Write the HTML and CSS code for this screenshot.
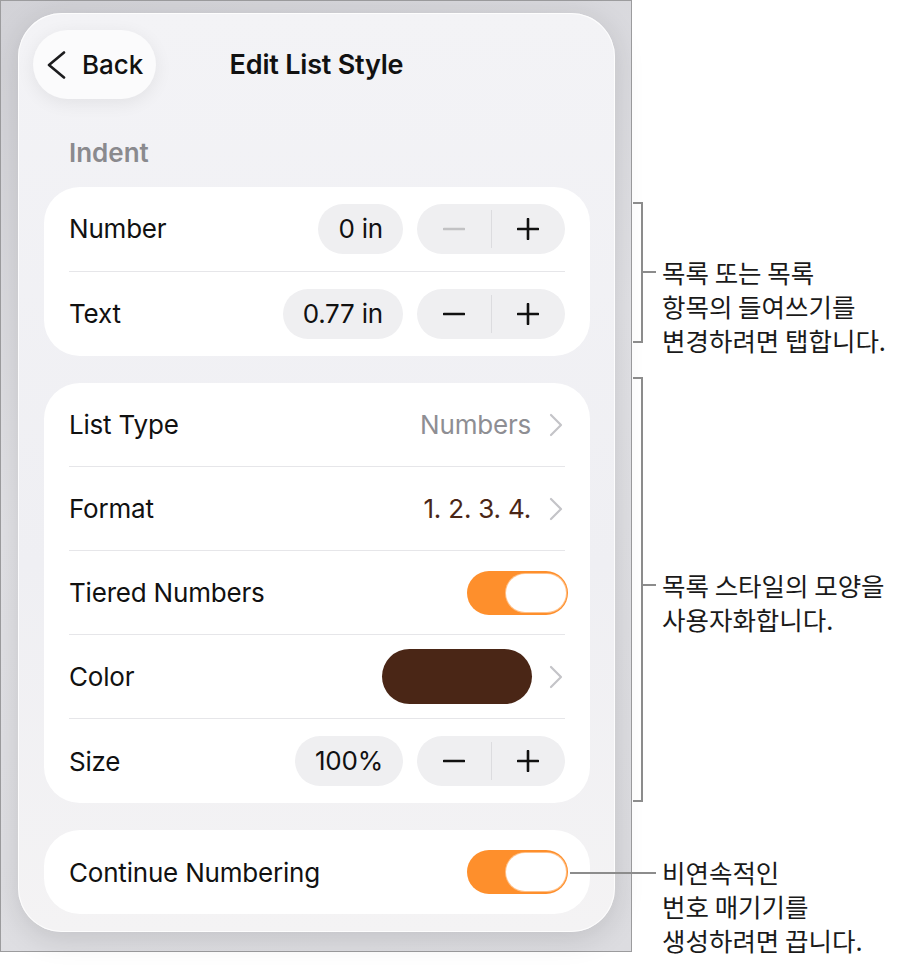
FILE: index.html
```html
<!DOCTYPE html>
<html>
<head>
  <meta charset="utf-8">
  <title>Edit List Style</title>
  <link rel="stylesheet" href="styles.css">
</head>
<body>
  <div class="page">
    <div class="device">
      <div class="sheet">
        <div class="nav">
          <button class="back">
            <svg width="19" height="28" viewBox="0 0 19 28"><polyline points="17,1.5 2,14 17,26.5" fill="none" stroke="#1c1c1e" stroke-width="2.6" stroke-linecap="round" stroke-linejoin="round"/></svg>
            <span>Back</span>
          </button>
          <div class="title">Edit List Style</div>
          <div></div>
        </div>

        <div class="section-label">Indent</div>

        <div class="card">
          <div class="row">
            <span class="label">Number</span>
            <div class="controls">
              <span class="pill">0 in</span>
              <div class="stepper">
                <span class="step">
                  <svg width="22" height="22" viewBox="0 0 22 22"><line x1="1" y1="11" x2="21" y2="11" stroke="#c2c2c4" stroke-width="2.6" stroke-linecap="round"/></svg>
                </span>
                <span class="step">
                  <svg width="22" height="22" viewBox="0 0 22 22"><line x1="1" y1="11" x2="21" y2="11" stroke="#111" stroke-width="2.6" stroke-linecap="round"/><line x1="11" y1="1" x2="11" y2="21" stroke="#111" stroke-width="2.6" stroke-linecap="round"/></svg>
                </span>
              </div>
            </div>
          </div>
          <div class="row">
            <span class="label">Text</span>
            <div class="controls">
              <span class="pill">0.77 in</span>
              <div class="stepper">
                <span class="step">
                  <svg width="22" height="22" viewBox="0 0 22 22"><line x1="1" y1="11" x2="21" y2="11" stroke="#111" stroke-width="2.6" stroke-linecap="round"/></svg>
                </span>
                <span class="step">
                  <svg width="22" height="22" viewBox="0 0 22 22"><line x1="1" y1="11" x2="21" y2="11" stroke="#111" stroke-width="2.6" stroke-linecap="round"/><line x1="11" y1="1" x2="11" y2="21" stroke="#111" stroke-width="2.6" stroke-linecap="round"/></svg>
                </span>
              </div>
            </div>
          </div>
        </div>

        <div class="card">
          <div class="row">
            <span class="label">List Type</span>
            <div class="controls">
              <span class="value gray">Numbers</span>
              <svg class="chev" width="14" height="24" viewBox="0 0 14 24"><polyline points="2,2 12,12 2,22" fill="none" stroke="#c4c4c8" stroke-width="2.2" stroke-linecap="round" stroke-linejoin="round"/></svg>
            </div>
          </div>
          <div class="row">
            <span class="label">Format</span>
            <div class="controls">
              <span class="value brown">1. 2. 3. 4.</span>
              <svg class="chev" width="14" height="24" viewBox="0 0 14 24"><polyline points="2,2 12,12 2,22" fill="none" stroke="#c4c4c8" stroke-width="2.2" stroke-linecap="round" stroke-linejoin="round"/></svg>
            </div>
          </div>
          <div class="row">
            <span class="label">Tiered Numbers</span>
            <div class="toggle"><span class="knob"></span></div>
          </div>
          <div class="row">
            <span class="label">Color</span>
            <div class="controls">
              <span class="swatch"></span>
              <svg class="chev" width="14" height="24" viewBox="0 0 14 24"><polyline points="2,2 12,12 2,22" fill="none" stroke="#c4c4c8" stroke-width="2.2" stroke-linecap="round" stroke-linejoin="round"/></svg>
            </div>
          </div>
          <div class="row">
            <span class="label">Size</span>
            <div class="controls">
              <span class="pill">100%</span>
              <div class="stepper">
                <span class="step">
                  <svg width="22" height="22" viewBox="0 0 22 22"><line x1="1" y1="11" x2="21" y2="11" stroke="#111" stroke-width="2.6" stroke-linecap="round"/></svg>
                </span>
                <span class="step">
                  <svg width="22" height="22" viewBox="0 0 22 22"><line x1="1" y1="11" x2="21" y2="11" stroke="#111" stroke-width="2.6" stroke-linecap="round"/><line x1="11" y1="1" x2="11" y2="21" stroke="#111" stroke-width="2.6" stroke-linecap="round"/></svg>
                </span>
              </div>
            </div>
          </div>
        </div>

        <div class="card">
          <div class="row">
            <span class="label">Continue Numbering</span>
            <div class="toggle"><span class="knob"></span></div>
          </div>
        </div>
      </div>
    </div>

    <!-- callouts -->
    <div class="bracket b1"></div>
    <div class="tick t1"></div>
    <div class="note n1">목록 또는 목록<br>항목의 들여쓰기를<br>변경하려면 탭합니다.</div>

    <div class="bracket b2"></div>
    <div class="tick t2"></div>
    <div class="note n2">목록 스타일의 모양을<br>사용자화합니다.</div>

    <div class="tick t3"></div>
    <div class="note n3">비연속적인<br>번호 매기기를<br>생성하려면 끕니다.</div>
  </div>
</body>
</html>
```

FILE: styles.css
```css
body {
  margin: 0;
  background: white;
  font-family: Inter, "Noto Sans", sans-serif;
  color: #111;
}

.page {
  position: relative;
  width: 907px;
  height: 966px;
}

.device {
  width: 632px;
  height: 952px;
  box-sizing: border-box;
  border: 1px solid #9c9c9e;
  background: linear-gradient(160deg, #d2d2d7 0%, #e2e2e6 45%, #dcdce0 100%);
  padding: 12px 0 0 17px;
}

.sheet {
  width: 597px;
  height: 919px;
  box-sizing: border-box;
  border-radius: 44px;
  background: linear-gradient(180deg, #f3f3f6 0%, #efeff3 60%, #f4f3f4 100%);
  box-shadow: 0 6px 30px rgba(0,0,0,0.13), inset 0 0 0 1px rgba(255,255,255,0.8);
  padding: 17px 0 0 0;
}

.nav {
  display: grid;
  grid-template-columns: 1fr auto 1fr;
  align-items: center;
  height: 69px;
  padding-left: 15px;
  padding-right: 15px;
}

.back {
  justify-self: start;
  display: flex;
  align-items: center;
  gap: 16px;
  width: 123px;
  height: 69px;
  padding: 0 0 0 14px;
  border: none;
  border-radius: 35px;
  background: #fbfbfc;
  box-shadow: 0 4px 18px rgba(0,0,0,0.07);
  font-family: Inter, sans-serif;
  font-size: 26px;
  font-weight: 500;
  color: #111;
  box-sizing: border-box;
}

.title {
  font-size: 27px;
  font-weight: 600;
  letter-spacing: -0.2px;
}

.section-label {
  margin: 39px 0 19px 51px;
  line-height: 30px;
  font-size: 26px;
  font-weight: 600;
  color: #8a8a8e;
}

.card {
  margin: 0 25px 27px 26px;
  background: white;
  border-radius: 36px;
  padding: 0 25px;
}

.row {
  height: 84px;
  display: flex;
  align-items: center;
  justify-content: space-between;
  border-bottom: 1.5px solid #e6e6e9;
  box-sizing: border-box;
}

.card:nth-of-type(3) .row {
  height: 84.5px;
}

.row:last-child {
  border-bottom: none;
}

.label {
  font-size: 26px;
  letter-spacing: -0.2px;
}

.controls {
  display: flex;
  align-items: center;
}

.pill {
  height: 50px;
  line-height: 50px;
  padding: 0 20px;
  border-radius: 25px;
  background: #efeff1;
  font-size: 26px;
  letter-spacing: -0.2px;
  margin-right: 14px;
}

.stepper {
  width: 148px;
  height: 50px;
  border-radius: 25px;
  background: #efeff1;
  display: flex;
  align-items: center;
}

.step {
  flex: 1;
  display: flex;
  justify-content: center;
  align-items: center;
  height: 38px;
}

.step:first-child {
  border-right: 1.5px solid #dcdcdf;
}

.step svg {
  display: block;
}

.value {
  font-size: 26px;
  letter-spacing: -0.2px;
  margin-right: 18px;
}

.gray { color: #8e8e93; }
.brown { color: #4a2616; }

.chev {
  display: block;
  margin-right: 2px;
}

.swatch {
  width: 150px;
  height: 55px;
  border-radius: 28px;
  background: #4a2616;
  margin-right: 17px;
}

.toggle {
  width: 101px;
  height: 44px;
  border-radius: 22px;
  background: #fe8f2c;
  display: flex;
  justify-content: flex-end;
  align-items: center;
  padding: 0 2px;
  box-sizing: border-box;
  margin-right: -3px;
}

.knob {
  width: 60px;
  height: 38px;
  border-radius: 19px;
  background: white;
  box-shadow: 0 0 0 1px #ffc088;
}

/* callouts */
.bracket {
  position: absolute;
  left: 633px;
  width: 10px;
  border: 2px solid #8c8c8c;
  border-left: none;
  box-sizing: border-box;
}

.b1 { top: 202px; height: 141px; }
.b2 { top: 377px; height: 425px; }

.tick {
  position: absolute;
  height: 2px;
  background: #8c8c8c;
}

.t1 { left: 643px; top: 271px; width: 13px; }
.t2 { left: 643px; top: 584px; width: 13px; }
.t3 { left: 570px; top: 872px; width: 86px; }

.note {
  position: absolute;
  left: 662px;
  font-family: "Noto Sans CJK KR", sans-serif;
  font-size: 25.5px;
  line-height: 34px;
  color: #1a1a1a;
  white-space: nowrap;
}

.n1 { top: 255px; }
.n2 { top: 568px; }
.n3 { top: 855px; }
```
